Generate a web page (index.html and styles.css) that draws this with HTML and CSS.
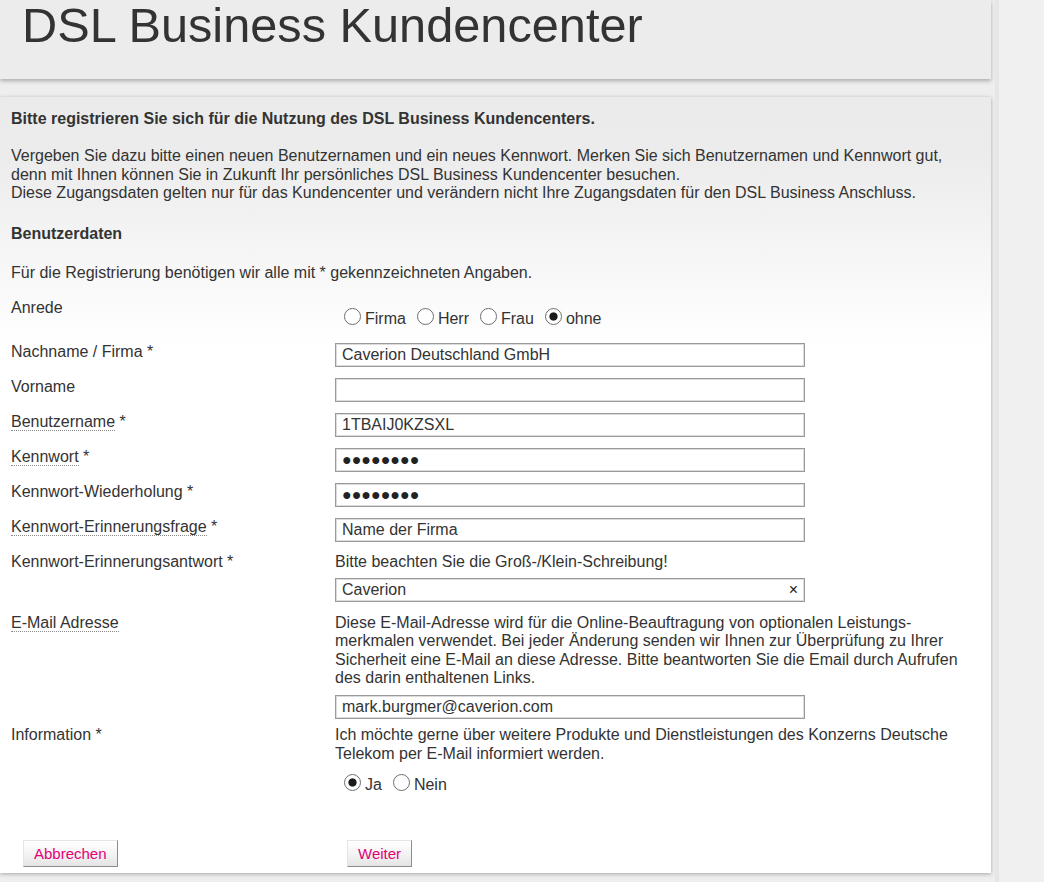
FILE: index.html
```html
<!DOCTYPE html>
<html lang="de">
<head>
<meta charset="utf-8">
<title>DSL Business Kundencenter</title>
<link rel="stylesheet" href="styles.css">
</head>
<body>
<div class="page">
  <header class="masthead">
    <h1 class="title">DSL Business Kundencenter</h1>
  </header>
  <main class="panel">
    <p class="lead">Bitte registrieren Sie sich für die Nutzung des DSL Business Kundencenters.</p>
    <p class="intro">Vergeben Sie dazu bitte einen neuen Benutzernamen und ein neues Kennwort. Merken Sie sich Benutzernamen und Kennwort gut, denn mit Ihnen können Sie in Zukunft Ihr persönliches DSL Business Kundencenter besuchen.<br>Diese Zugangsdaten gelten nur für das Kundencenter und verändern nicht Ihre Zugangsdaten für den DSL Business Anschluss.</p>
    <h2 class="section">Benutzerdaten</h2>
    <p class="hint">Für die Registrierung benötigen wir alle mit * gekennzeichneten Angaben.</p>

    <form class="form">
      <div class="row row-anrede">
        <div class="label">Anrede</div>
        <div class="value">
          <div class="radios">
            <label class="opt"><input type="radio" name="anrede"><span>Firma</span></label>
            <label class="opt"><input type="radio" name="anrede"><span>Herr</span></label>
            <label class="opt"><input type="radio" name="anrede"><span>Frau</span></label>
            <label class="opt"><input type="radio" name="anrede" checked><span>ohne</span></label>
          </div>
        </div>
      </div>

      <div class="row">
        <div class="label">Nachname / Firma *</div>
        <div class="value"><input class="input" type="text" value="Caverion Deutschland GmbH"></div>
      </div>

      <div class="row">
        <div class="label">Vorname</div>
        <div class="value"><input class="input" type="text" value=""></div>
      </div>

      <div class="row">
        <div class="label"><span class="help">Benutzername</span> *</div>
        <div class="value"><input class="input" type="text" value="1TBAIJ0KZSXL"></div>
      </div>

      <div class="row">
        <div class="label"><span class="help">Kennwort</span> *</div>
        <div class="value"><input class="input pw" type="text" value="&#9679;&#9679;&#9679;&#9679;&#9679;&#9679;&#9679;&#9679;"></div>
      </div>

      <div class="row">
        <div class="label">Kennwort-Wiederholung *</div>
        <div class="value"><input class="input pw" type="text" value="&#9679;&#9679;&#9679;&#9679;&#9679;&#9679;&#9679;&#9679;"></div>
      </div>

      <div class="row">
        <div class="label"><span class="help">Kennwort-Erinnerungsfrage</span> *</div>
        <div class="value"><input class="input" type="text" value="Name der Firma"></div>
      </div>

      <div class="row">
        <div class="label">Kennwort-Erinnerungsantwort *</div>
        <div class="value">
          <div class="note">Bitte beachten Sie die Groß-/Klein-Schreibung!</div>
          <div class="clearable note-field">
            <input class="input" type="text" value="Caverion">
            <span class="clear">&#215;</span>
          </div>
        </div>
      </div>

      <div class="row row-mail">
        <div class="label"><span class="help">E-Mail Adresse</span></div>
        <div class="value">
          <div class="desc">Diese E-Mail-Adresse wird für die Online-Beauftragung von optionalen Leistungs&shy;merkmalen verwendet. Bei jeder Änderung senden wir Ihnen zur Überprüfung zu Ihrer Sicherheit eine E-Mail an diese Adresse. Bitte beantworten Sie die Email durch Aufrufen des darin enthaltenen Links.</div>
          <input class="input desc-field" type="text" value="mark.burgmer@caverion.com">
        </div>
      </div>

      <div class="row row-info">
        <div class="label">Information *</div>
        <div class="value">
          <div class="desc">Ich möchte gerne über weitere Produkte und Dienstleistungen des Konzerns Deutsche Telekom per E-Mail informiert werden.</div>
          <div class="radios radios-info">
            <label class="opt"><input type="radio" name="info" checked><span>Ja</span></label>
            <label class="opt"><input type="radio" name="info"><span>Nein</span></label>
          </div>
        </div>
      </div>

      <div class="actions">
        <div><button type="button" class="btn">Abbrechen</button></div>
        <div><button type="button" class="btn">Weiter</button></div>
      </div>
    </form>
  </main>
</div>
</body>
</html>
```

FILE: styles.css
```css
html, body {
  margin: 0;
  padding: 0;
}

body {
  background: linear-gradient(to right, #eeeeee 0, #eeeeee 995px, #e6e6e6 995px, #e6e6e6 999px, #f0f0f0 999px);
  font-family: "Liberation Sans", Arial, sans-serif;
  font-size: 16px;
  line-height: 18.4px;
  color: #333333;
  min-height: 882px;
}

.page {
  width: 991px;
  padding-bottom: 10px;
}

.masthead {
  position: relative;
  z-index: 1;
  height: 79px;
  box-sizing: border-box;
  padding: 1px 0 0 22px;
  background: #ececec;
  box-shadow: 0 2px 4px rgba(0, 0, 0, 0.28);
}

.title {
  margin: 0;
  font-size: 48.7px;
  font-weight: normal;
  line-height: 1;
  color: #333333;
}

.panel {
  display: block;
  margin-top: 18px;
  padding: 13px 11px 6px;
  background: linear-gradient(#ebebeb 0, #ececec 60px, #ffffff 250px);
  box-shadow: 0 1px 4px rgba(0, 0, 0, 0.3);
}

.lead {
  margin: 0;
  font-weight: bold;
}

.intro {
  margin: 19px 0 0;
}

.section {
  margin: 22px 0 0;
  font-size: 16px;
  line-height: 18.4px;
  font-weight: bold;
}

.hint {
  margin: 21px 0 0;
}

.form {
  margin-top: 17px;
}

.row {
  display: grid;
  grid-template-columns: 324px 1fr;
}

.row + .row {
  margin-top: 11px;
}

.row-anrede {
  min-height: 33px;
}

.row-mail {
  margin-top: 12px !important;
}

.row-info {
  margin-top: 7px !important;
}

.help {
  border-bottom: 1px dotted #8a8a8a;
}

.input {
  display: block;
  box-sizing: border-box;
  width: 470px;
  height: 24px;
  margin: 0;
  padding: 0 6px;
  border: 1px solid #9a9a9a;
  box-shadow: inset 0 0 0 1px #dcdcdc;
  background: #ffffff;
  font-family: "Liberation Sans", Arial, sans-serif;
  font-size: 16px;
  color: #333333;
  outline: none;
}

.pw {
  color: #222222;
}

.note-field {
  margin-top: 6px;
}

.clearable {
  position: relative;
  width: 470px;
}

.clear {
  position: absolute;
  right: 7px;
  top: 3px;
  font-size: 16px;
  line-height: 18px;
  color: #222222;
}

.desc-field {
  margin-top: 8px;
}

.radios {
  display: flex;
  align-items: flex-start;
  padding-left: 9px;
  margin-top: 11px;
}

.radios-info {
  margin-top: 13px;
}

.opt {
  display: flex;
  align-items: flex-start;
  margin-right: 11px;
}

.opt input {
  appearance: none;
  -webkit-appearance: none;
  box-sizing: border-box;
  width: 17px;
  height: 17px;
  margin: -2px 4px 0 0;
  border: 1px solid #6e6e6e;
  border-radius: 50%;
  background: #ffffff;
}

.opt input:checked {
  background: radial-gradient(circle, #1b1b1b 0, #1b1b1b 3.6px, #ffffff 4.6px);
}

.actions {
  display: grid;
  grid-template-columns: 324px 1fr;
  margin-top: 45px;
}

.btn {
  margin-left: 12px;
  height: 27px;
  padding: 0 10px;
  border: 1px solid;
  border-color: #e4e4e4 #8c8c8c #8c8c8c #e4e4e4;
  background: linear-gradient(#ffffff, #f4f4f4 50%, #e4e4e4);
  font-family: "Liberation Sans", Arial, sans-serif;
  font-size: 15px;
  color: #e20074;
  cursor: pointer;
}
```
